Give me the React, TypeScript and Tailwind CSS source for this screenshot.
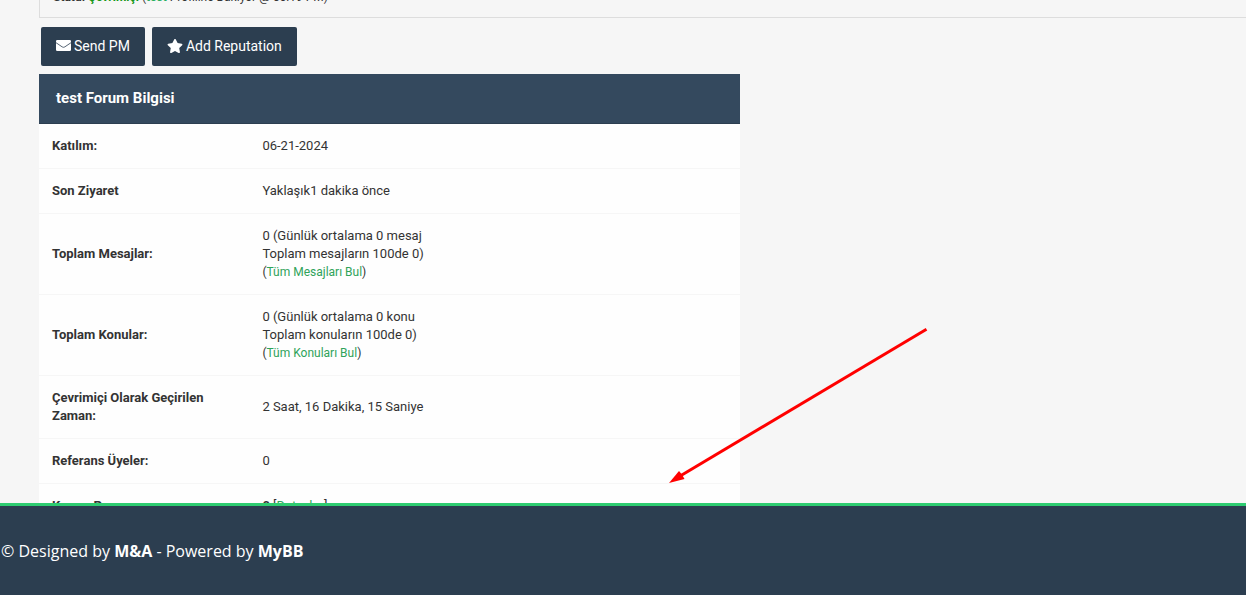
import React from "react";
import { FaStar } from "react-icons/fa";

type Row = { label: string; value: React.ReactNode };

function EnvelopeIcon() {
  return (
    <svg className="w-[15px] shrink-0" viewBox="0 0 15 11" fill="none" aria-hidden="true">
      <rect width="15" height="11" rx="1.3" fill="#fff" />
      <path d="M0 2.700L6.200 6.900Q7.500 7.700 8.800 6.900L15 2.700" stroke="#2c3e50" strokeWidth="0.8" />
    </svg>
  );
}

function FindLink({ children }: { children: React.ReactNode }) {
  return (
    <span className="block text-xs leading-[18px]">
      (<a href="#" className="text-[#2fa35a]">{children}</a>)
    </span>
  );
}

const rows: Row[] = [
  { label: "Katılım:", value: "06-21-2024" },
  { label: "Son Ziyaret", value: "Yaklaşık1 dakika önce" },
  {
    label: "Toplam Mesajlar:",
    value: (
      <>
        0 (Günlük ortalama 0 mesaj
        <br />
        Toplam mesajların 100de 0)
        <FindLink>Tüm Mesajları Bul</FindLink>
      </>
    ),
  },
  {
    label: "Toplam Konular:",
    value: (
      <>
        0 (Günlük ortalama 0 konu
        <br />
        Toplam konuların 100de 0)
        <FindLink>Tüm Konuları Bul</FindLink>
      </>
    ),
  },
  { label: "Çevrimiçi Olarak Geçirilen Zaman:", value: "2 Saat, 16 Dakika, 15 Saniye" },
  { label: "Referans Üyeler:", value: "0" },
  {
    label: "Karma Puanı:",
    value: (
      <>
        <strong className="font-bold">0</strong> [<a href="#" className="text-[#2fa35a]">Detaylar</a>]
      </>
    ),
  },
];

const buttonClass =
  "flex h-[39px] items-center gap-[3px] rounded-[2px] bg-[#2c3e50] px-[15px] pb-0.5 text-sm text-white";

export default function App() {
  return (
    <div className="relative flex h-screen flex-col overflow-hidden bg-[#f6f6f6] font-['Roboto',sans-serif] text-[13px] leading-[18px] text-[#333]">
      <main className="min-h-0 flex-1 overflow-hidden pl-[39px]">
        <section className="-mt-3 border-b border-l border-[#ddd] pb-[11px] pl-[13px] text-xs leading-[18px]">
          <strong className="font-bold">Statü:</strong>{" "}
          <a href="#" className="font-bold text-[#159615]">Çevrimiçi</a> (
          <a href="#" className="font-bold text-[#27ae60]">test</a> Profiline Bakıyor @ 06:19 PM)
        </section>
        <div className="flex gap-[7px] px-[2px] pt-[9px] pb-2">
          <button type="button" className={buttonClass}>
            <EnvelopeIcon />
            Send PM
          </button>
          <button type="button" className={buttonClass}>
            <FaStar className="size-4" />
            Add Reputation
          </button>
        </div>
        <table className="w-[58.1%] border-separate border-spacing-0 bg-[#fefefe]">
          <thead>
            <tr>
              <th colSpan={2} className="h-[50px] border-b border-[#2c3e50] bg-[#34495e] px-[17px] pb-0.5 text-left text-[15px] font-bold text-white">
                test Forum Bilgisi
              </th>
            </tr>
          </thead>
          <tbody>
            {rows.map((row) => (
              <tr key={row.label}>
                <th scope="row" className="w-[30%] border-b border-[#f6f6f6] px-[13px] py-[13px] text-left font-bold">
                  {row.label}
                </th>
                <td className="border-b border-[#f6f6f6] px-[13px] py-[13px]">{row.value}</td>
              </tr>
            ))}
          </tbody>
        </table>
      </main>
      <footer className="flex h-[92px] shrink-0 items-center border-t-3 border-[#2ecc71] bg-[#2c3e50] px-px font-['Open_Sans',sans-serif] text-base text-white">
        <p>
          © Designed by <strong className="font-bold">M&amp;A</strong> - Powered by{" "}
          <a href="#" className="font-bold">MyBB</a>
        </p>
      </footer>
      <svg className="pointer-events-none absolute top-[325px] left-[665px]" width="265" height="162" viewBox="665 325 265 162" aria-hidden="true">
        <path d="M926.500 329.200L681 475.500" stroke="#ff0000" strokeWidth="3" />
        <path d="M669 483L679 471L682 474.500L684.500 479Z" fill="#ff0000" />
      </svg>
    </div>
  );
}
